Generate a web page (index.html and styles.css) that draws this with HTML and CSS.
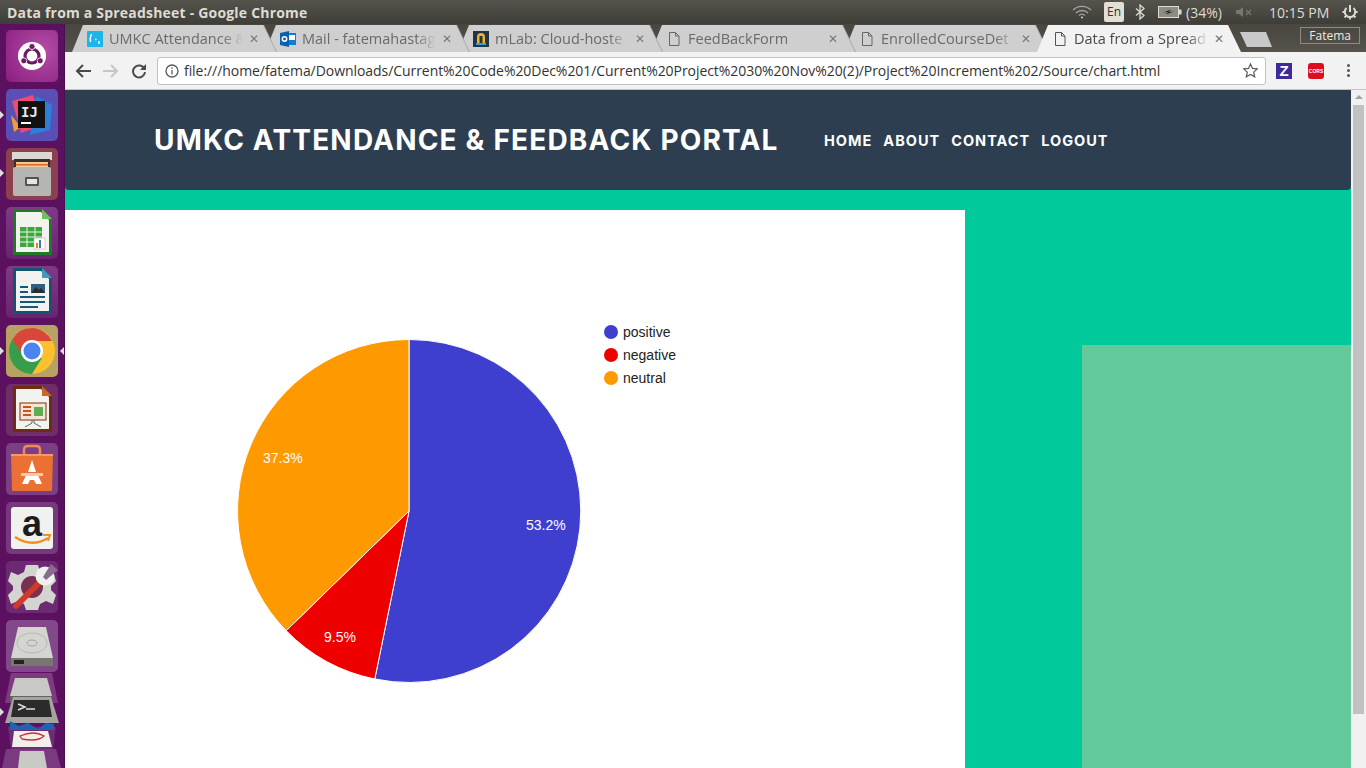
FILE: index.html
```html
<!DOCTYPE html>
<html lang="en">
<head>
  <meta charset="UTF-8">
  <title>Data from a Spreadsheet - Google Chrome</title>
  <link rel="stylesheet" href="styles.css">
</head>
<body>
  <!-- Ubuntu top panel -->
  <div class="panel">
    <div class="panel-title">Data from a Spreadsheet - Google Chrome</div>
    <div class="tray">
      <svg class="tray-wifi" width="20" height="14" viewBox="0 0 20 14" fill="none" stroke="#a8a59c" stroke-width="1.3"><path d="M1 5a13 13 0 0 1 18 0"/><path d="M4 8a8.500 8.500 0 0 1 12 0"/><path d="M7 10.500a4.500 4.500 0 0 1 6 0"/><circle cx="10" cy="12.500" r="1" fill="#d8d5cc" stroke="none"/></svg>
      <div class="tray-lang">En</div>
      <svg class="tray-bt" width="10" height="16" viewBox="0 0 10 16" fill="none" stroke="#dfdbd2" stroke-width="1.3"><path d="M1 4.500l8 7-4 3.500V1l4 3.500-8 7"/></svg>
      <svg class="tray-batt" width="24" height="12" viewBox="0 0 24 12"><rect x="0.500" y="0.500" width="20" height="11" fill="#8d8b84" stroke="#dfdbd2"/><rect x="21" y="3.500" width="2.500" height="5" fill="#dfdbd2"/><path d="M5 6.500l8-3-2 2.500 5-.5-8 3 2-2.500z" fill="#2f2e2a"/></svg>
      <div class="tray-pct">(34%)</div>
      <svg class="tray-vol" width="16" height="10" viewBox="0 0 16 10" fill="#77756d"><path d="M0 3h3l4-3v10l-4-3H0z"/><path d="M10 3l5 5M15 3l-5 5" stroke="#77756d" stroke-width="1.300"/></svg>
      <div class="tray-time">10:15 PM</div>
      <svg class="tray-power" width="16" height="16" viewBox="0 0 16 16" fill="none" stroke="#dfdbd2" stroke-width="2"><path d="M8 1v7"/><path d="M4.500 4a5.200 5.200 0 1 0 7 0"/><path d="M0.500 8h2M13.500 8h2M2.500 13.500l1.500-1.500M12 12l1.500 1.500M8 13.500v2" stroke-width="1.800"/></svg>
    </div>
  </div>

  <div class="desktop">
    <!-- launcher -->
    <div class="launcher">
      <div class="tile tile-ubuntu">
        <svg viewBox="0 0 52 52" width="52" height="52"><circle cx="26" cy="26" r="14" fill="#fff"/><circle cx="26" cy="26" r="7" fill="none" stroke="#6b1a63" stroke-width="3.200"/><circle cx="26" cy="16.500" r="3" fill="#6b1a63" stroke="#fff" stroke-width=".8"/><circle cx="17.800" cy="30.800" r="3" fill="#6b1a63" stroke="#fff" stroke-width=".8"/><circle cx="34.200" cy="30.800" r="3" fill="#6b1a63" stroke="#fff" stroke-width=".8"/></svg>
      </div>
      <div class="tile tile-idea">
        <svg viewBox="0 0 52 52" width="52" height="52"><path d="M6 12l21-6 10 30-22 8z" fill="#ee4a73"/><path d="M30 7l16 9-2 25-20 5z" fill="#2f7fd8"/><path d="M5 26l10 12-7 5z" fill="#f09a34"/><rect x="12" y="12" width="27" height="27" fill="#111"/><text x="15" y="28" class="ij">IJ</text><rect x="15" y="33" width="10" height="2" fill="#fff"/></svg>
      </div>
      <div class="tile tile-files">
        <svg viewBox="0 0 52 52" width="52" height="52"><path d="M6 4h40v8H6z" fill="#d8d8d4"/><path d="M8 11h36v12H8z" fill="#3c3028"/><path d="M10 14h32v7H10z" fill="#f0c890"/><path d="M10 16h32v1.500H10z" fill="#d9682e"/><rect x="7" y="19" width="38" height="29" rx="2" fill="#b5b5b1"/><rect x="19" y="29" width="14" height="9" rx="1" fill="#555"/><rect x="21" y="31" width="10" height="5" fill="#e4e4e0"/></svg>
      </div>
      <div class="tile tile-office">
        <svg viewBox="0 0 52 52" width="52" height="52"><path d="M7 2h29l10 10v36H7z" fill="#1f7a24"/><path d="M10 5h25l8 8v32H10z" fill="#f2f2ee"/><path d="M36 2l10 10H36z" fill="#6fbf60"/><rect x="14" y="20" width="22" height="20" fill="#3aa83a"/><path d="M14 25h22M14 30h22M14 35h22M21 20v20M29 20v20" stroke="#f2f2ee"/><rect x="28" y="31" width="11" height="11" fill="#fff" stroke="#aaa" stroke-width=".5"/><rect x="30" y="36" width="2" height="5" fill="#e2832a"/><rect x="33" y="33" width="2" height="8" fill="#3b78c4"/></svg>
      </div>
      <div class="tile tile-office">
        <svg viewBox="0 0 52 52" width="52" height="52"><path d="M7 2h29l10 10v36H7z" fill="#11566f"/><path d="M10 5h25l8 8v32H10z" fill="#f2f2ee"/><path d="M36 2l10 10H36z" fill="#3f9bc0"/><path d="M14 20h8v2h-8zM14 25h8v2h-8zM14 30h25v2H14zM14 35h25v2H14zM14 40h18v2H14z" fill="#14587a"/><rect x="25" y="18" width="14" height="9" fill="#2e5f86"/><path d="M25 27l5-6 3 3 2-2 4 5z" fill="#2b2b2b"/></svg>
      </div>
      <div class="tile tile-chrome">
        <svg viewBox="0 0 52 52" width="52" height="52"><circle cx="26" cy="26" r="23" fill="#fbc02d"/><path d="M26 3a23 23 0 0 0-19.900 11.500L15 30l11-14h20a23 23 0 0 0-20-13z" fill="#d9473a"/><path d="M6.100 14.500A23 23 0 0 0 26 49l10-16-16 1z" fill="#389d4a"/><circle cx="26" cy="26" r="11" fill="#fff"/><circle cx="26" cy="26" r="8.500" fill="#4a84ee"/></svg>
      </div>
      <div class="tile tile-impress">
        <svg viewBox="0 0 52 52" width="52" height="52"><path d="M7 2h29l10 10v36H7z" fill="#6e2c10"/><path d="M10 5h25l8 8v32H10z" fill="#f2f2ee"/><path d="M36 2l10 10H36z" fill="#c8662e"/><rect x="14" y="19" width="26" height="17" fill="#f6e4d4" stroke="#7a3414"/><path d="M17 22h8v2h-8zM17 26h8v2h-8zM17 30h8v2h-8z" fill="#c4561e"/><rect x="28" y="23" width="9" height="9" fill="#5fae50"/><path d="M26 36v3l-7 4M28 36v3l7 4" stroke="#666" fill="none"/></svg>
      </div>
      <div class="tile tile-software">
        <svg viewBox="0 0 52 52" width="52" height="52"><path d="M18 12V7q0-4 4-4h8q4 0 4 4v5" fill="none" stroke="#ec8a52" stroke-width="2.500"/><path d="M5 11h42l-1 37H6z" fill="#ea7133"/><path d="M5 11h42v2H5z" fill="#f59a66"/><path d="M26 17l4 12h-8zM21 30h10l5 11h-6l-2-4h-4l-2 4h-6z" fill="#fff"/><rect x="15" y="30" width="22" height="3" fill="#f7c9ad"/></svg>
      </div>
      <div class="tile tile-amazon">
        <svg viewBox="0 0 52 52" width="52" height="52"><rect x="5" y="5" width="42" height="42" rx="3" fill="#f1f1ef"/><text x="26" y="34" class="amazon">a</text><path d="M9 35q17 11 33 1" fill="none" stroke="#f0911c" stroke-width="2.500"/><path d="M37 33l7 0-2 6" fill="none" stroke="#f0911c" stroke-width="2"/></svg>
      </div>
      <div class="tile tile-settings">
        <svg viewBox="0 0 52 52" width="52" height="52"><path d="M20 4h12l2 7 6 3 7-3 3 9-5 5v4l5 5-3 9-7-3-6 3-2 6H20l-2-6-6-3-7 3-3-9 5-5v-4l-5-5 3-9 7 3 6-3z" fill="#d4d4d0"/><circle cx="26" cy="26" r="11" fill="#7a3050"/><path d="M10 45l24-24" stroke="#cf3a2a" stroke-width="6" stroke-linecap="round"/><circle cx="39" cy="15" r="9.500" fill="#f0f0ee"/><path d="M37 16L45 3l7 6-12 10z" fill="#8a6a8e"/></svg>
      </div>
      <div class="tile tile-disk">
        <svg viewBox="0 0 52 52" width="52" height="52"><path d="M12 7h28l7 31H5z" fill="#d4d4d0"/><ellipse cx="26" cy="23" rx="15" ry="10" fill="none" stroke="#b8b8b4"/><ellipse cx="26" cy="23" rx="5" ry="3" fill="none" stroke="#a5a5a1"/><path d="M5 38h42v8H5z" fill="#77766f"/><rect x="8" y="40" width="10" height="4" fill="#222"/></svg>
      </div>
      <!-- folded icons at the bottom of the launcher -->
      <svg class="launcher-stack" viewBox="0 0 65 95" width="65" height="95">
        <path d="M11 0h41l6 30H5z" fill="#7d3a80"/>
        <path d="M15 5h32l5 18H10z" fill="#c8c8c4"/><path d="M10 23h42v5H10z" fill="#66655f"/>
        <path d="M5 50l8-26h38l8 26z" fill="#a5a4a0"/>
        <path d="M14 27h35l3 17H11z" fill="#2b2b2b"/>
        <path d="M18 31l7 3-7 3M26 36h9" stroke="#ddd" stroke-width="1.500" fill="none"/>
        <path d="M8 54l4 30h40l4-30z" fill="#6d2d72"/>
        <path d="M10 48l9 5 9-3 10 6 8-6 8 1v6H10z" fill="#1f64b0"/>
        <path d="M14 58h34l4 16H12z" fill="#f0efec"/>
        <path d="M20 63q14-6 24 0-6 6-22 3z" fill="none" stroke="#cf2f2f" stroke-width="1.300"/>
        <path d="M6 76h50l5 19H2z" fill="#7a3a80"/>
        <path d="M20 78h24l3 17H18z" fill="#c9c9c5"/>
      </svg>
      <!-- running app markers -->
      <span class="pip pip-idea"></span>
      <span class="pip pip-files"></span>
      <span class="pip pip-chrome"></span>
      <span class="pip pip-chrome-r"></span>
      <span class="pip pip-term"></span>
    </div>

    <div class="browser">
      <!-- tab strip -->
      <div class="tabstrip">
        <div class="tab">
          <div class="tab-shape">
            <svg class="favicon" width="16" height="16" viewBox="0 0 16 16"><rect width="16" height="16" rx="1" fill="#1bb5e8"/><path d="M4.500 3q-2 4-1 8M8 8.500h1.500M12 10v3" stroke="#fff" stroke-width="1.500" fill="none"/></svg>
            <span class="tab-title">UMKC Attendance &amp;</span>
            <span class="tab-close">✕</span>
          </div>
        </div>
        <div class="tab">
          <div class="tab-shape">
            <svg class="favicon" width="16" height="16" viewBox="0 0 16 16"><rect x="7" y="2" width="9" height="12" fill="#0e7fd0"/><rect x="9" y="4" width="6" height="5" fill="#fff"/><path d="M0 2l9-2v16l-9-2z" fill="#0a5fb0"/><circle cx="4.500" cy="8" r="2.200" fill="none" stroke="#fff" stroke-width="1.500"/></svg>
            <span class="tab-title">Mail - fatemahastag</span>
            <span class="tab-close">✕</span>
          </div>
        </div>
        <div class="tab">
          <div class="tab-shape">
            <svg class="favicon" width="16" height="16" viewBox="0 0 16 16"><rect width="16" height="16" fill="#243447"/><path d="M4 12V6a4 4 0 0 1 8 0v6z" fill="#f0b429"/><rect x="6.500" y="5" width="3" height="7" fill="#243447"/><rect x="3" y="12" width="10" height="2" fill="#38a0d8"/></svg>
            <span class="tab-title">mLab: Cloud-hoste</span>
            <span class="tab-close">✕</span>
          </div>
        </div>
        <div class="tab">
          <div class="tab-shape">
            <svg class="favicon" width="16" height="16" viewBox="0 0 16 16" fill="none" stroke="#666"><path d="M3.500 1.500h6l3.500 3.500v9.500h-9.500z"/><path d="M9.500 1.500v3.500h3.500"/></svg>
            <span class="tab-title tab-title-short">FeedBackForm</span>
            <span class="tab-close">✕</span>
          </div>
        </div>
        <div class="tab">
          <div class="tab-shape">
            <svg class="favicon" width="16" height="16" viewBox="0 0 16 16" fill="none" stroke="#666"><path d="M3.500 1.500h6l3.500 3.500v9.500h-9.500z"/><path d="M9.500 1.500v3.500h3.500"/></svg>
            <span class="tab-title">EnrolledCourseDet</span>
            <span class="tab-close">✕</span>
          </div>
        </div>
        <div class="tab tab-active">
          <div class="tab-shape">
            <svg class="favicon" width="16" height="16" viewBox="0 0 16 16" fill="none" stroke="#555"><path d="M3.500 1.500h6l3.500 3.500v9.500h-9.500z"/><path d="M9.500 1.500v3.500h3.500"/></svg>
            <span class="tab-title">Data from a Spread</span>
            <span class="tab-close">✕</span>
          </div>
        </div>
        <div class="tab-new"></div>
        <div class="profile">Fatema</div>
      </div>

      <!-- toolbar -->
      <div class="toolbar">
        <div class="tool">
          <svg width="16" height="14" viewBox="0 0 16 14" fill="none" stroke="#4a4a4a" stroke-width="2"><path d="M16 7H2M8 1L2 7l6 6"/></svg>
        </div>
        <div class="tool">
          <svg width="16" height="14" viewBox="0 0 16 14" fill="none" stroke="#c6c6c6" stroke-width="2"><path d="M0 7h14M8 1l6 6-6 6"/></svg>
        </div>
        <div class="tool">
          <svg width="16" height="16" viewBox="0 0 16 16" fill="none" stroke="#4a4a4a" stroke-width="2"><path d="M13.500 6A6 6 0 1 0 14 9"/><path d="M15 1v6H9z" fill="#4a4a4a" stroke="none"/></svg>
        </div>
        <div class="omnibox">
          <svg class="omni-info" width="14" height="14" viewBox="0 0 14 14" fill="none" stroke="#5a5a5a" stroke-width="1.300"><circle cx="7" cy="7" r="6"/><path d="M7 6v4.500M7 3.200v1.500"/></svg>
          <span class="omni-url">file:///home/fatema/Downloads/Current%20Code%20Dec%201/Current%20Project%2030%20Nov%20(2)/Project%20Increment%202/Source/chart.html</span>
          <svg class="omni-star" width="15" height="15" viewBox="0 0 15 15" fill="none" stroke="#5a5a5a" stroke-width="1.200"><path d="M7.500 1l2 4.400 4.800.5-3.600 3.200 1 4.700-4.200-2.400-4.200 2.400 1-4.700L.7 5.900l4.800-.5z"/></svg>
        </div>
        <div class="ext">
          <div class="ext-z">Z</div>
        </div>
        <div class="ext">
          <div class="ext-cors">CORS</div>
        </div>
        <div class="ext ext-menu">
          <span></span><span></span><span></span>
        </div>
      </div>

      <!-- page -->
      <div class="viewport">
        <div class="page">
          <div class="navbar">
            <div class="brand">UMKC ATTENDANCE &amp; FEEDBACK PORTAL</div>
            <div class="nav-links">
              <a>HOME</a>
              <a>ABOUT</a>
              <a>CONTACT</a>
              <a>LOGOUT</a>
            </div>
          </div>
          <div class="content">
            <div class="chart-card">
              <svg class="chart" viewBox="65 210 900 558" width="900" height="558">
                <path d="M409 511V339.500A171.500 171.500 0 1 1 374.800 679z" fill="#3f3fcf" stroke="#fff"/>
                <path d="M409 511L374.800 679A171.500 171.500 0 0 1 286.200 630.700z" fill="#ee0000" stroke="#fff"/>
                <path d="M409 511L286.200 630.700A171.500 171.500 0 0 1 409 339.500z" fill="#ff9900" stroke="#fff"/>
                <text x="526" y="530" class="pie-label">53.2%</text>
                <text x="324" y="642" class="pie-label">9.5%</text>
                <text x="263" y="463" class="pie-label">37.3%</text>
                <circle cx="611" cy="332" r="7" fill="#3f3fcf"/>
                <text x="623" y="337" class="legend-label">positive</text>
                <circle cx="611" cy="355" r="7" fill="#ee0000"/>
                <text x="623" y="360" class="legend-label">negative</text>
                <circle cx="611" cy="378" r="7" fill="#ff9900"/>
                <text x="623" y="383" class="legend-label">neutral</text>
              </svg>
            </div>
            <div class="side-box"></div>
          </div>
        </div>
        <div class="scrollbar">
          <div class="scroll-up"></div>
          <div class="scroll-thumb"></div>
        </div>
      </div>
    </div>
  </div>
</body>
</html>
```

FILE: styles.css
```css
* {
  box-sizing: border-box;
}
html, body {
  margin: 0;
  height: 768px;
  overflow: hidden;
}
body {
  font-family: "Open Sans", sans-serif;
  background: #3c3b37;
}

/* top panel */
.panel {
  height: 24px;
  display: flex;
  align-items: center;
  justify-content: space-between;
  background: linear-gradient(#55534c, #3e3d38);
  color: #dfdbd2;
}
.panel-title {
  padding-left: 7px;
  font-size: 14px;
  font-weight: 700;
  letter-spacing: 0.2px;
}
.tray {
  display: flex;
  align-items: center;
  font-size: 14px;
}
.tray-wifi { margin-right: 12px; }
.tray-lang {
  width: 20px;
  height: 20px;
  margin-right: 11px;
  border-radius: 2px;
  background: #e2dfd7;
  color: #333;
  font-size: 12px;
  line-height: 20px;
  text-align: center;
}
.tray-bt { margin-right: 13px; }
.tray-batt { margin-right: 4px; }
.tray-pct { width: 50px; }
.tray-vol { margin-right: 17px; }
.tray-time { width: 73px; }
.tray-power { margin-right: 8px; }

.desktop {
  display: flex;
  height: 744px;
}

/* launcher */
.launcher {
  position: relative;
  width: 65px;
  flex: none;
  display: flex;
  flex-direction: column;
  gap: 7px;
  padding: 6px 0 0 6px;
  background: #5c1160;
  border-right: 1px solid #4a0d4e;
}
.tile {
  width: 52px;
  height: 52px;
  flex: none;
  border-radius: 5px;
  background: linear-gradient(#7f3a86, #6a2570);
}
.tile svg {
  display: block;
}
.tile-ubuntu { background: radial-gradient(circle at 70% 40%, #b24fa4, #8c1c80); }
.tile-idea { background: #5a4fb5; }
.tile-files { background: #8c3f4e; }
.tile-chrome { background: #b8a263; }
.tile-impress { background: #6f2f66; }
.tile-software { background: #7d3f84; }
.tile-amazon { background: #76397c; }
.tile-settings { background: #6c2a72; }
.tile-disk { background: #81488a; }
.ij {
  font-family: "DejaVu Sans Mono", monospace;
  font-size: 14px;
  font-weight: 700;
  fill: #e8e8e8;
}
.amazon {
  font-family: "Liberation Sans", sans-serif;
  font-size: 36px;
  font-weight: 700;
  text-anchor: middle;
  fill: #1d1d1d;
}
.launcher-stack {
  display: block;
  flex: none;
  margin: -6px 0 0 -6px;
}
.pip {
  position: absolute;
  width: 0;
  height: 0;
  border-top: 4px solid transparent;
  border-bottom: 4px solid transparent;
  border-left: 4px solid #ddd;
  left: 0;
}
.pip-idea { top: 87px; }
.pip-files { top: 145px; }
.pip-chrome { top: 323px; }
.pip-chrome-r {
  top: 323px;
  left: 60px;
  border-left: 0;
  border-right: 4px solid #ddd;
}
.pip-term { top: 684px; }

.browser {
  flex: 1;
  min-width: 0;
  display: flex;
  flex-direction: column;
}

/* tabs */
.tabstrip {
  height: 28px;
  flex: none;
  display: flex;
  padding: 1px 0 0 7px;
  background: linear-gradient(#48463f, #55534b);
}
.tab {
  position: relative;
  width: 204px;
  height: 27px;
  flex: none;
  margin-right: -11px;
  filter: drop-shadow(1px 0 0 #a8a8a8);
}
.tab:nth-child(1) { z-index: 6; }
.tab:nth-child(2) { z-index: 5; }
.tab:nth-child(3) { z-index: 4; }
.tab:nth-child(4) { z-index: 3; }
.tab:nth-child(5) { z-index: 2; }
.tab.tab-active { z-index: 7; filter: none; }
.tab-shape {
  height: 100%;
  display: flex;
  align-items: center;
  padding: 0 15px 0 15px;
  background: #cfcfcf;
  clip-path: polygon(0 100%, 11px 0, 191px 0, 100% 100%);
  color: #6a6a6a;
  font-size: 14.500px;
}
.tab-active .tab-shape {
  background: #f2f2f2;
  color: #4a4a4a;
}
.favicon {
  flex: none;
  margin-right: 6px;
}
.tab-title {
  flex: 1;
  min-width: 0;
  white-space: nowrap;
  -webkit-mask-image: linear-gradient(to right, #000 85%, transparent);
  mask-image: linear-gradient(to right, #000 85%, transparent);
}
.tab-title-short {
  -webkit-mask-image: none;
  mask-image: none;
}
.tab-close {
  flex: none;
  width: 14px;
  margin-left: 4px;
  font-size: 12px;
  color: #777;
  text-align: center;
}
.tab-new {
  width: 32px;
  height: 15px;
  flex: none;
  margin: 7px 0 0 10px;
  background: #c9c9c9;
  clip-path: polygon(0 0, 26px 0, 100% 100%, 7px 100%);
}
.profile {
  height: 17px;
  flex: none;
  margin: 2px 6px 0 auto;
  padding: 0 8px;
  border: 1px solid #8c8a82;
  color: #eeeae2;
  font-size: 12px;
  line-height: 15px;
}

/* toolbar */
.toolbar {
  height: 38px;
  flex: none;
  display: flex;
  align-items: center;
  padding-left: 4px;
  background: #f2f2f2;
  border-bottom: 1px solid #c4c4c4;
}
.tool {
  width: 28px;
  height: 28px;
  flex: none;
  display: flex;
  align-items: center;
  justify-content: center;
}
.omnibox {
  width: 1109px;
  height: 28px;
  flex: none;
  display: flex;
  align-items: center;
  margin: 0 2px 0 4px;
  padding: 0 7px;
  background: #fff;
  border: 1px solid #c2c2c2;
  border-radius: 3px;
}
.omni-info { flex: none; margin-right: 5px; }
.omni-url {
  flex: 1;
  min-width: 0;
  white-space: nowrap;
  font-size: 14px;
  letter-spacing: -0.06px;
  color: #333;
}
.omni-star { flex: none; }
.ext {
  width: 32px;
  height: 28px;
  flex: none;
  display: flex;
  align-items: center;
  justify-content: center;
}
.ext-z {
  width: 16px;
  height: 16px;
  background: #3f2a9a;
  color: #fff;
  font-family: "Liberation Sans", sans-serif;
  font-size: 15px;
  font-weight: 700;
  line-height: 16px;
  text-align: center;
}
.ext-cors {
  width: 16px;
  height: 16px;
  border-radius: 3px;
  background: #e00d1f;
  color: #fff;
  font-family: "Liberation Sans", sans-serif;
  font-size: 5px;
  font-weight: 700;
  line-height: 16px;
  text-align: center;
}
.ext-menu {
  flex-direction: column;
  gap: 2px;
}
.ext-menu span {
  width: 3px;
  height: 3px;
  border-radius: 50%;
  background: #555;
}

/* page */
.viewport {
  flex: 1;
  min-height: 0;
  display: flex;
}
.page {
  flex: 1;
  min-width: 0;
  display: flex;
  flex-direction: column;
  background: #00c99c;
}
.navbar {
  height: 100px;
  flex: none;
  display: flex;
  align-items: center;
  padding-left: 89px;
  background: #2c3e50;
  border-radius: 0 0 4px 4px;
}
.brand {
  width: 670px;
  flex: none;
  color: #fff;
  font-family: Inter, sans-serif;
  font-size: 28px;
  font-weight: 700;
  letter-spacing: 1.18px;
  white-space: nowrap;
}
.nav-links {
  display: flex;
  gap: 11px;
  padding-top: 1px;
}
.nav-links a {
  color: #fff;
  font-family: Inter, sans-serif;
  font-size: 14.500px;
  font-weight: 700;
  letter-spacing: 1px;
}
.content {
  flex: 1;
  min-height: 0;
  display: flex;
  padding-top: 20px;
}
.chart-card {
  width: 900px;
  flex: none;
  background: #fff;
}
.chart {
  display: block;
}
.pie-label {
  font-family: "Liberation Sans", sans-serif;
  font-size: 14px;
  fill: #fff;
}
.legend-label {
  font-family: "Liberation Sans", sans-serif;
  font-size: 14px;
  fill: #222;
}
.side-box {
  width: 269px;
  flex: none;
  margin: 135px 0 0 auto;
  background: #62c99d;
}
.scrollbar {
  width: 15px;
  flex: none;
  display: flex;
  flex-direction: column;
  align-items: center;
  background: #f1f1f1;
}
.scroll-up {
  width: 0;
  height: 0;
  margin-top: 5px;
  border-left: 4px solid transparent;
  border-right: 4px solid transparent;
  border-bottom: 4px solid #a3a3a3;
}
.scroll-thumb {
  width: 11px;
  height: 609px;
  margin-top: 6px;
  background: #c1c1c1;
}
```
